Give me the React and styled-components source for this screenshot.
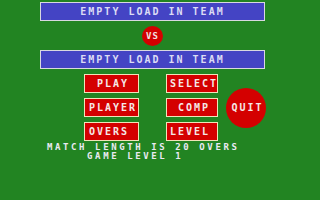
import React from "react";
import styled, { createGlobalStyle } from "styled-components";

const GlobalStyle = createGlobalStyle`
  html, body {
    margin: 0;
    padding: 0;
    background: #228422;
  }
`;

const buttons = [
  { label: "PLAY", indent: 12 },
  { label: "SELECT", indent: 3 },
  { label: "PLAYER", indent: 4 },
  { label: "COMP", indent: 11 },
  { label: "OVERS", indent: 4 },
  { label: "LEVEL", indent: 3 },
];

const App = () => {
  return (
    <>
      <GlobalStyle />
      <Screen>
        <TeamBar>EMPTY LOAD IN TEAM</TeamBar>
        <VsRow>
          <VsBadge>VS</VsBadge>
        </VsRow>
        <TeamBar>EMPTY LOAD IN TEAM</TeamBar>
        <MenuArea>
          <ButtonGrid>
            {buttons.map((b) => (
              <MenuButton key={b.label} indent={b.indent}>
                {b.label}
              </MenuButton>
            ))}
          </ButtonGrid>
          <QuitButton>QUIT</QuitButton>
        </MenuArea>
        <Info>
          <InfoLine>MATCH LENGTH IS 20 OVERS</InfoLine>
          <InfoLine>{"     GAME LEVEL 1"}</InfoLine>
        </Info>
      </Screen>
    </>
  );
};

export default App;

const Screen = styled.div`
  width: 320px;
  height: 200px;
  box-sizing: border-box;
  padding-top: 2px;
  background: #228422;
  font-family: "DejaVu Sans Mono", "Liberation Mono", monospace;
  font-weight: bold;
  font-size: 10px;
  letter-spacing: 2px;
  color: #e8e4f0;
  display: flex;
  flex-direction: column;
  overflow: hidden;
`;

const TeamBar = styled.div`
  margin-left: 40px;
  width: 225px;
  height: 19px;
  box-sizing: border-box;
  border: 1px solid #d8d8e0;
  background: #4444c4;
  text-align: center;
  line-height: 17px;
  color: #dcdcf4;
`;

const VsRow = styled.div`
  height: 29px;
  display: flex;
  align-items: center;
  padding-left: 142px;
`;

const VsBadge = styled.div`
  width: 21px;
  height: 20px;
  border-radius: 50%;
  background: #d40000;
  display: flex;
  align-items: center;
  justify-content: center;
  font-size: 9px;
  letter-spacing: 1px;
  color: #f0e0e0;
`;

const MenuArea = styled.div`
  margin-top: 5px;
  padding-left: 84px;
  display: flex;
  align-items: center;
`;

const ButtonGrid = styled.div`
  display: grid;
  grid-template-columns: 55px 52px;
  grid-auto-rows: 19px;
  column-gap: 27px;
  row-gap: 5px;
`;

const MenuButton = styled.div`
  box-sizing: border-box;
  border: 1px solid #f0e4b8;
  background: #d40000;
  color: #f4e8e8;
  line-height: 17px;
  padding-left: ${(p) => p.indent}px;
  white-space: nowrap;
`;

const QuitButton = styled.div`
  margin-left: 8px;
  width: 40px;
  height: 40px;
  border-radius: 50%;
  background: #d40000;
  color: #f4e8e8;
  display: flex;
  align-items: center;
  justify-content: center;
  padding-left: 3px;
  box-sizing: border-box;
`;

const Info = styled.div`
  margin-top: 2px;
  padding-left: 47px;
  color: #eaeaf2;
  font-size: 9px;
  letter-spacing: 2.6px;
`;

const InfoLine = styled.div`
  height: 9px;
  line-height: 9px;
  white-space: pre;
`;
